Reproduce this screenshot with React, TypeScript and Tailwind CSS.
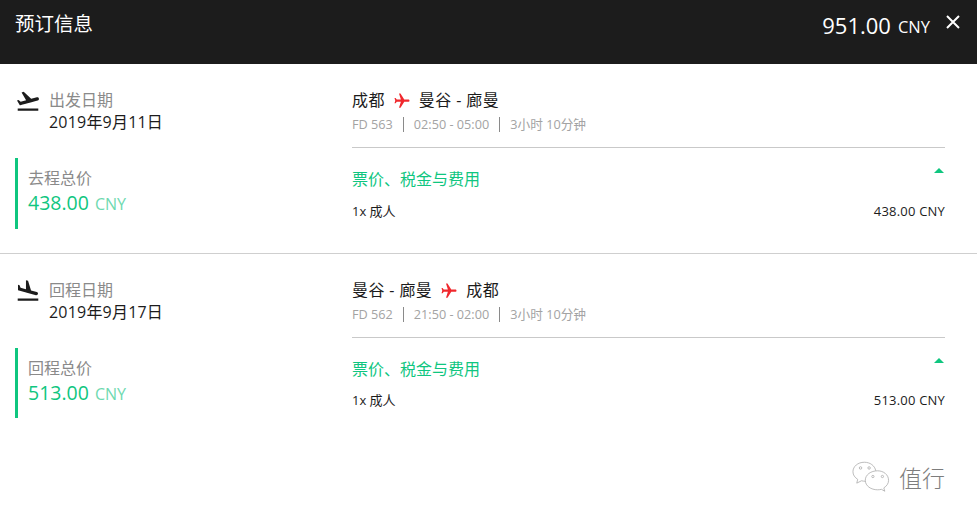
import { MdFlightLand, MdFlightTakeoff, MdFlight } from "react-icons/md";

type Leg = {
  dateLabel: string;
  date: string;
  totalLabel: string;
  total: string;
  from: string;
  to: string;
  flight: string;
  times: string;
  duration: string;
  Icon: typeof MdFlightLand;
  rowTop: string;
  border: boolean;
};

const legs: Leg[] = [
  {
    dateLabel: "出发日期",
    date: "2019年9月11日",
    totalLabel: "去程总价",
    total: "438.00",
    from: "成都",
    to: "曼谷 - 廊曼",
    flight: "FD 563",
    times: "02:50 - 05:00",
    duration: "3小时 10分钟",
    Icon: MdFlightTakeoff,
    rowTop: "mt-[12px]",
    border: true,
  },
  {
    dateLabel: "回程日期",
    date: "2019年9月17日",
    totalLabel: "回程总价",
    total: "513.00",
    from: "曼谷 - 廊曼",
    to: "成都",
    flight: "FD 562",
    times: "21:50 - 02:00",
    duration: "3小时 10分钟",
    Icon: MdFlightLand,
    rowTop: "mt-[11px]",
    border: false,
  },
];

function LegSection({ leg }: { leg: Leg }) {
  const Icon = leg.Icon;
  return (
    <section className={`h-[190px] pt-[26px] ${leg.border ? "border-b border-[#cfcfcf]" : ""} flex pl-[15px] pr-[32px]`}>
      <div className="w-[337px] shrink-0">
        <div className="flex h-[42px]">
          <Icon className="w-[26px] h-[26px] mt-[-2px] text-[#1c1c1c]" />
          <div className="ml-[8px] mt-[-1px] text-[16px] leading-[22px]">
            <div className="text-[#8a8a8a]">{leg.dateLabel}</div>
            <div className="text-[#1c1c1c] tracking-[0.2px]">{leg.date}</div>
          </div>
        </div>
        <div className={`${leg.border ? "h-[71px]" : "h-[70px]"} mt-[26px] w-[200px] border-l-[3px] border-[#0fc67f] pl-[10px] pt-[10px]`}>
          <div className="text-[16px] leading-[21px] text-[#8a8a8a]">{leg.totalLabel}</div>
          <div className="leading-[26px] mt-[1px] text-[#0fc67f]">
            <span className="text-[19.5px] font-medium">{leg.total}</span>
            <span className="text-[16px] ml-[6px] text-[#6fd9b0]">CNY</span>
          </div>
        </div>
      </div>
      <div className="flex-1">
        <div className="h-[58px] border-b border-[#c9c9c9]">
          <div className="flex items-center text-[16px] leading-[21px] tracking-[0.4px] text-[#1c1c1c]">
            <span>{leg.from}</span>
            <MdFlight className="w-[18px] h-[18px] mx-[8px] rotate-90 text-[#f0282d]" />
            <span>{leg.to}</span>
          </div>
          <div className="flex items-center mt-[4px] text-[12.7px] leading-[18px] text-[#a3a3a3]">
            <span>{leg.flight}</span>
            <span className="w-px h-[15px] bg-[#8a8a8a] mx-[10px]" />
            <span>{leg.times}</span>
            <span className="w-px h-[15px] bg-[#8a8a8a] mx-[10px]" />
            <span>{leg.duration}</span>
          </div>
        </div>
        <div className="pt-[21px] relative text-[16px] leading-[21px] text-[#0fc67f]">
          票价、税金与费用
          <span className="absolute right-[1px] top-[20px] w-0 h-0 border-l-[5px] border-r-[5px] border-b-[5px] border-l-transparent border-r-transparent border-b-[#0fc67f]" />
        </div>
        <div className={`${leg.rowTop} flex justify-between text-[13px] leading-[18px] text-[#1c1c1c]`}>
          <span>1x 成人</span>
          <span className="tracking-[0.2px]">{leg.total} CNY</span>
        </div>
      </div>
    </section>
  );
}

export default function App() {
  return (
    <div className="relative w-[977px] h-[519px] bg-white overflow-hidden font-['Open_Sans','Noto_Sans_CJK_SC',sans-serif]">
      <header className="h-[64px] bg-[#1c1c1c] text-white flex items-start justify-between pl-[15px] pr-[16px] pt-[10px]">
        <h1 className="text-[19.5px] leading-[28px] font-normal">预订信息</h1>
        <div className="flex items-start">
          <span className="text-[22px] leading-[30px]">951.00</span>
          <span className="text-[16.500px] leading-[22px] ml-[7px] mt-[6px]">CNY</span>
          <svg className="ml-[15px] mt-[4px]" width="16" height="16" viewBox="0 0 16 16" fill="none" stroke="white" strokeWidth="2">
            <path d="M2 2l12 12M14 2L2 14" />
          </svg>
        </div>
      </header>
      <LegSection leg={legs[0]} />
      <LegSection leg={legs[1]} />
      <div className="absolute left-[852px] top-[460px] flex items-center text-[#7d7d7d]">
        <svg width="38" height="33" viewBox="0 0 40 34" fill="none" stroke="#a8a8a8" strokeWidth="0.8">
          <path d="M13 2C6 2 1 6.500 1 12c0 3.500 2 6 5 8l-1 4 5-2.500c1.500.4 3 .5 4 .5" />
          <path d="M13 2c6 0 11 3.500 12 9" />
          <path d="M27 11c-7 0-13 4-13 10s6 10 13 10c1.500 0 3-.2 4-.5l3.500 2-1-3.500c3-2 5-4.500 5-8 0-6-5.500-10-11.500-10z" />
          <circle cx="9" cy="8" r="1.300" />
          <circle cx="18" cy="8" r="1.300" />
          <circle cx="22" cy="17" r="1.200" />
          <circle cx="32" cy="17" r="1.200" />
        </svg>
        <span className="ml-[9px] text-[23px] leading-[30px] font-['Noto_Sans_CJK_SC',sans-serif] font-light">值行</span>
      </div>
    </div>
  );
}
